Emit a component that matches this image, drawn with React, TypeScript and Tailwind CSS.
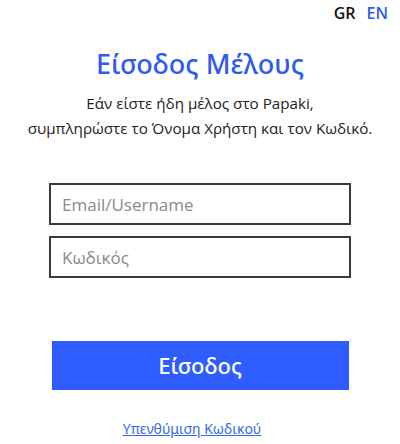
import React from "react";

export default function App() {
  return (
    <div className="w-[400px] h-[444px] bg-white flex flex-col items-center" style={{ fontFamily: '"Open Sans", sans-serif' }}>
      <div className="w-full flex justify-end gap-[11px] pr-[12px] pt-[2px] text-[16px] font-semibold leading-[22px]">
        <span className="text-[#111]">GR</span>
        <span className="text-[#2f5bef]">EN</span>
      </div>
      <h1 className="mt-[22px] text-[27px] leading-[36px] text-[#2f5bef] font-medium" style={{ fontFamily: '"Noto Sans", sans-serif' }}>Είσοδος Μέλους</h1>
      <p className="mt-[9px] text-[15.2px] leading-[25px] text-[#222] text-center">
        Εάν είστε ήδη μέλος στο Papaki,<br />συμπληρώστε το Όνομα Χρήστη και τον Κωδικό.
      </p>
      <div className="mt-[42px] w-[302px] flex flex-col gap-[11px]">
        <input
          placeholder="Email/Username"
          className="h-[42px] w-full border-2 border-[#3a3a3a] px-[11px] text-[17px] text-[#222] placeholder:text-[#8a8a8a] outline-none"
        />
        <input
          placeholder="Κωδικός"
          type="password"
          className="h-[42px] w-full border-2 border-[#3a3a3a] px-[11px] text-[17px] text-[#222] placeholder:text-[#8a8a8a] outline-none"
        />
      </div>
      <button
        className="mt-[63px] w-[297px] h-[49px] bg-[#2f5cff] text-white text-[22px] font-medium"
        style={{ fontFamily: '"Noto Sans", sans-serif' }}
      >
        Είσοδος
      </button>
      <a
        href="#"
        className="mt-[29px] mr-[16px] text-[14px] leading-[20px] text-[#3868ea] underline"
        style={{ fontFamily: '"Noto Sans", sans-serif' }}
      >
        Υπενθύμιση Κωδικού
      </a>
    </div>
  );
}
